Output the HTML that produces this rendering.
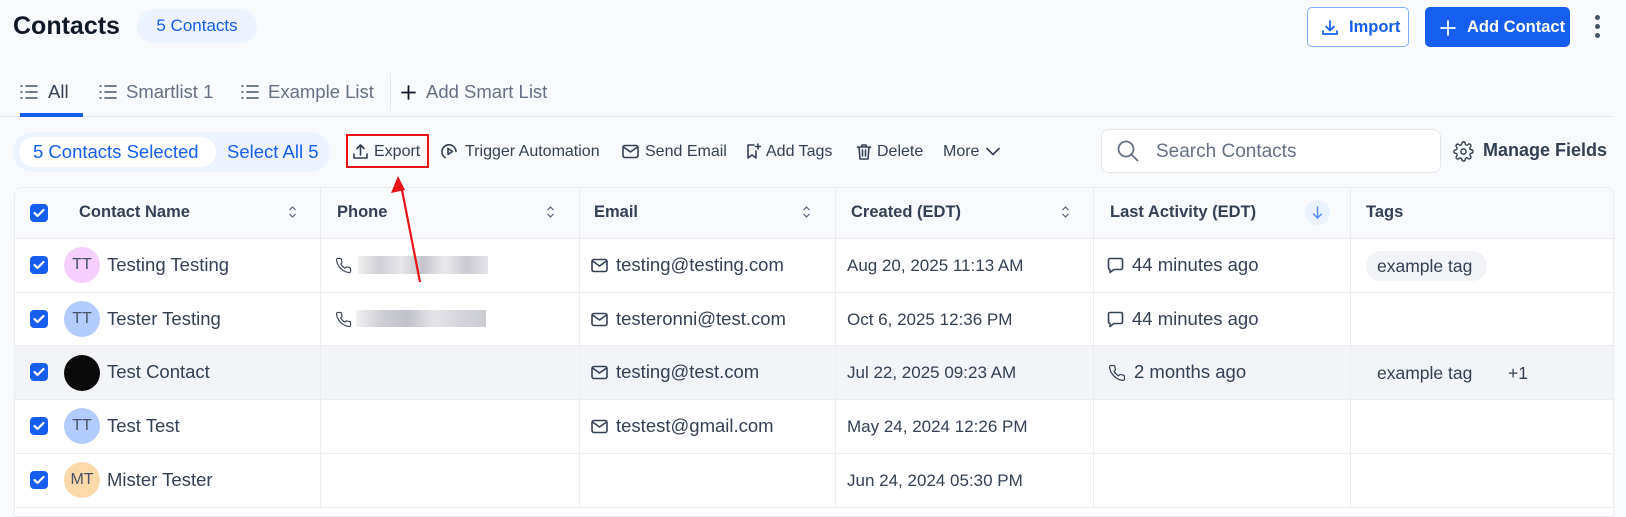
<!DOCTYPE html>
<html><head><meta charset="utf-8"><style>
*{box-sizing:border-box;margin:0;padding:0}
body{width:1626px;height:515px;overflow:hidden;background:#f9fafb;font-family:"Liberation Sans",sans-serif;color:#344054;position:relative}
.a{position:absolute;white-space:nowrap}
svg{display:block}
.ic{stroke:#344054;fill:none;stroke-width:1.6;stroke-linecap:round;stroke-linejoin:round}
.tb{font-size:16px;color:#344054;top:143px}
.hd{font-size:16.5px;font-weight:bold;color:#344054;top:203px}
.cell{font-size:18.5px;color:#344054}
.dt{font-size:17px;color:#344054}
.cb{position:absolute;left:30px;width:18px;height:18px;border-radius:4px;background:#155eef}
.av{position:absolute;left:64px;width:36px;height:36px;border-radius:50%;font-size:16px;color:#475467;text-align:center;line-height:36px}
.vl{position:absolute;top:187px;width:1px;height:320px;background:#eaecf0}
.hl{position:absolute;left:14px;width:1600px;height:1px;background:#eaecf0}
</style></head><body>
<div class="a" style="left:13px;top:12px;font-size:25px;font-weight:bold;color:#101828">Contacts</div>
<div class="a" style="left:137px;top:9px;width:120px;height:34px;border-radius:17px;background:#eef4ff;color:#155eef;font-size:17px;text-align:center;line-height:34px">5 Contacts</div>

<div class="a" style="left:1307px;top:7px;width:102px;height:40px;border:1px solid #84adff;border-radius:5px;background:#fff"></div>
<svg class="a" style="left:1320px;top:18px" width="20" height="20" viewBox="0 0 20 20"><path d="M10 3v9M6 8.5l4 4 4-4M3 13v3h14v-3" stroke="#155eef" fill="none" stroke-width="1.7" stroke-linecap="round" stroke-linejoin="round"/></svg>
<div class="a" style="left:1349px;top:18px;font-size:16.5px;font-weight:bold;color:#155eef">Import</div>
<div class="a" style="left:1425px;top:7px;width:145px;height:40px;border-radius:5px;background:#155eef"></div>
<svg class="a" style="left:1440px;top:20px" width="16" height="16" viewBox="0 0 16 16"><path d="M8 1v14M1 8h14" stroke="#fff" stroke-width="1.8" stroke-linecap="round"/></svg>
<div class="a" style="left:1467px;top:18px;font-size:16.5px;font-weight:bold;color:#fff">Add Contact</div>
<div class="a" style="left:1595px;top:15px;width:5px;height:5px;border-radius:50%;background:#475467"></div>
<div class="a" style="left:1595px;top:24px;width:5px;height:5px;border-radius:50%;background:#475467"></div>
<div class="a" style="left:1595px;top:33px;width:5px;height:5px;border-radius:50%;background:#475467"></div>

<!-- tabs -->
<svg class="a" style="left:20px;top:84px" width="18" height="16" viewBox="0 0 18 16"><g stroke="#475467" stroke-width="1.6" stroke-linecap="round"><path d="M1 2h1M1 8h1M1 14h1M6 2h11M6 8h11M6 14h11"/></g></svg>
<div class="a" style="left:48px;top:81px;font-size:18.5px;color:#344054">All</div>
<svg class="a" style="left:99px;top:84px" width="18" height="16" viewBox="0 0 18 16"><g stroke="#475467" stroke-width="1.6" stroke-linecap="round"><path d="M1 2h1M1 8h1M1 14h1M6 2h11M6 8h11M6 14h11"/></g></svg>
<div class="a" style="left:126px;top:81px;font-size:18.5px;color:#667085">Smartlist 1</div>
<svg class="a" style="left:241px;top:84px" width="18" height="16" viewBox="0 0 18 16"><g stroke="#475467" stroke-width="1.6" stroke-linecap="round"><path d="M1 2h1M1 8h1M1 14h1M6 2h11M6 8h11M6 14h11"/></g></svg>
<div class="a" style="left:268px;top:81px;font-size:18.5px;color:#667085">Example List</div>
<div class="a" style="left:390px;top:73px;width:1px;height:38px;background:#e4e7ec"></div>
<svg class="a" style="left:401px;top:85px" width="15" height="15" viewBox="0 0 15 15"><path d="M7.5 1v13M1 7.5h13" stroke="#101828" stroke-width="1.8" stroke-linecap="round"/></svg>
<div class="a" style="left:426px;top:81px;font-size:18.5px;color:#667085">Add Smart List</div>
<div class="a" style="left:0;top:116px;width:1614px;height:1px;background:#e4e7ec"></div>
<div class="a" style="left:20px;top:113px;width:63px;height:4px;background:#155eef"></div>

<!-- toolbar -->
<div class="a" style="left:13px;top:132px;width:317px;height:40px;border-radius:20px;background:#eef4ff"></div>
<div class="a" style="left:19px;top:137px;width:197px;height:30px;border-radius:15px;background:#fff"></div>
<div class="a" style="left:33px;top:141px;font-size:18.5px;color:#155eef">5 Contacts Selected</div>
<div class="a" style="left:227px;top:141px;font-size:18.5px;color:#155eef">Select All 5</div>
<div class="a" style="left:346px;top:134px;width:83px;height:34px;border:2.5px solid #e8141a"></div>
<svg class="a" style="left:352px;top:143px" width="17" height="17" viewBox="0 0 17 17"><path d="M8.5 12V2M5 5.5l3.5-3.5 3.5 3.5M2 11v4h13v-4" class="ic"/></svg>
<div class="a tb" style="left:374px">Export</div>
<svg class="a" style="left:441px;top:143px" width="17" height="17" viewBox="0 0 17 17"><path d="M4 14.5A7 7 0 1 1 15 8.5" class="ic"/><path d="M7 5.5v6l4.5-3z" class="ic"/></svg>
<div class="a tb" style="left:465px">Trigger Automation</div>
<svg class="a" style="left:622px;top:144px" width="17" height="15" viewBox="0 0 17 15"><rect x="1" y="1.5" width="15" height="12" rx="2" class="ic"/><path d="M1.5 3l7 5 7-5" class="ic"/></svg>
<div class="a tb" style="left:645px">Send Email</div>
<svg class="a" style="left:745px;top:143px" width="16" height="17" viewBox="0 0 16 17"><path d="M9 2H3v13l4-3 4 3V8M13 1v5M10.5 3.5h5" class="ic"/></svg>
<div class="a tb" style="left:766px">Add Tags</div>
<svg class="a" style="left:856px;top:143px" width="16" height="17" viewBox="0 0 16 17"><path d="M1.5 4h13M6 4V2h4v2M3 4l1 12h8l1-12M6.5 7v6M9.5 7v6" class="ic"/></svg>
<div class="a tb" style="left:877px">Delete</div>
<div class="a tb" style="left:943px">More</div>
<svg class="a" style="left:986px;top:147px" width="14" height="9" viewBox="0 0 14 9"><path d="M1 1.5l6 6 6-6" class="ic"/></svg>

<div class="a" style="left:1101px;top:129px;width:340px;height:44px;border:1px solid #e4e7ec;border-radius:8px;background:#fff"></div>
<svg class="a" style="left:1117px;top:140px" width="22" height="22" viewBox="0 0 22 22"><circle cx="9" cy="9" r="7.5" stroke="#667085" stroke-width="1.8" fill="none"/><path d="M14.5 14.5l6 6" stroke="#667085" stroke-width="1.8" stroke-linecap="round"/></svg>
<div class="a" style="left:1156px;top:141px;font-size:19px;color:#667085">Search Contacts</div>
<svg class="a" style="left:1453px;top:141px" width="21" height="21" viewBox="0 0 24 24"><circle cx="12" cy="12" r="3" class="ic" stroke-width="1.8"/><path class="ic" stroke-width="1.8" d="M19.4 15a1.7 1.7 0 0 0 .3 1.8l.1.1a2 2 0 1 1-2.8 2.8l-.1-.1a1.7 1.7 0 0 0-1.8-.3 1.7 1.7 0 0 0-1 1.5V21a2 2 0 1 1-4 0v-.1a1.7 1.7 0 0 0-1.1-1.5 1.7 1.7 0 0 0-1.8.3l-.1.1a2 2 0 1 1-2.8-2.8l.1-.1a1.7 1.7 0 0 0 .3-1.8 1.7 1.7 0 0 0-1.5-1H3a2 2 0 1 1 0-4h.1a1.7 1.7 0 0 0 1.5-1.1 1.7 1.7 0 0 0-.3-1.8l-.1-.1a2 2 0 1 1 2.8-2.8l.1.1a1.7 1.7 0 0 0 1.8.3H9a1.7 1.7 0 0 0 1-1.5V3a2 2 0 1 1 4 0v.1a1.7 1.7 0 0 0 1 1.5 1.7 1.7 0 0 0 1.8-.3l.1-.1a2 2 0 1 1 2.8 2.8l-.1.1a1.7 1.7 0 0 0-.3 1.8V9a1.7 1.7 0 0 0 1.5 1H21a2 2 0 1 1 0 4h-.1a1.7 1.7 0 0 0-1.5 1z"/></svg>
<div class="a" style="left:1483px;top:140px;font-size:18px;font-weight:bold;color:#344054">Manage Fields</div>

<!-- table -->
<div class="a" style="left:14px;top:187px;width:1600px;height:330px;background:#fff;border:1px solid #eaecf0;border-radius:8px 8px 0 0"></div>
<div class="a" style="left:15px;top:188px;width:1598px;height:50px;background:#f9fafb;border-radius:8px 8px 0 0"></div>
<div class="a" style="left:15px;top:345px;width:1598px;height:54px;background:#f2f4f7"></div>
<div class="hl" style="top:238px"></div><div class="hl" style="top:292px"></div><div class="hl" style="top:345px"></div><div class="hl" style="top:399px"></div><div class="hl" style="top:453px"></div><div class="hl" style="top:507px"></div>
<div class="vl" style="left:320px"></div><div class="vl" style="left:579px"></div><div class="vl" style="left:835px"></div><div class="vl" style="left:1093px"></div><div class="vl" style="left:1350px"></div>

<!-- header -->
<div class="cb" style="top:204px"></div>
<div class="a hd" style="left:79px">Contact Name</div>
<div class="a hd" style="left:337px">Phone</div>
<div class="a hd" style="left:594px">Email</div>
<div class="a hd" style="left:851px">Created (EDT)</div>
<div class="a hd" style="left:1110px">Last Activity (EDT)</div>
<div class="a hd" style="left:1366px">Tags</div>
<svg class="a" style="left:288px;top:205px" width="9" height="14" viewBox="0 0 9 14"><path d="M1.5 5l3-3 3 3M1.5 9l3 3 3-3" stroke="#667085" fill="none" stroke-width="1.3"/></svg>
<svg class="a" style="left:546px;top:205px" width="9" height="14" viewBox="0 0 9 14"><path d="M1.5 5l3-3 3 3M1.5 9l3 3 3-3" stroke="#667085" fill="none" stroke-width="1.3"/></svg>
<svg class="a" style="left:802px;top:205px" width="9" height="14" viewBox="0 0 9 14"><path d="M1.5 5l3-3 3 3M1.5 9l3 3 3-3" stroke="#667085" fill="none" stroke-width="1.3"/></svg>
<svg class="a" style="left:1061px;top:205px" width="9" height="14" viewBox="0 0 9 14"><path d="M1.5 5l3-3 3 3M1.5 9l3 3 3-3" stroke="#667085" fill="none" stroke-width="1.3"/></svg>
<div class="a" style="left:1305px;top:200px;width:25px;height:25px;border-radius:50%;background:#eaf2ff"></div>
<svg class="a" style="left:1312px;top:206px" width="11" height="13" viewBox="0 0 11 13"><path d="M5.5 1v11M1.5 8l4 4 4-4" stroke="#528bff" fill="none" stroke-width="1.4" stroke-linecap="round"/></svg>

<!-- rows -->
<div class="cb" style="top:256px"></div><div class="cb" style="top:310px"></div><div class="cb" style="top:363px"></div><div class="cb" style="top:417px"></div><div class="cb" style="top:471px"></div>

<svg style="position:absolute;left:0;top:0" width="60" height="515"><g stroke="#fff" stroke-width="2.2" fill="none" stroke-linecap="round" stroke-linejoin="round"><path d="M34.5 213l3 3 6-6"/><path d="M34.5 265l3 3 6-6"/><path d="M34.5 319l3 3 6-6"/><path d="M34.5 372l3 3 6-6"/><path d="M34.5 426l3 3 6-6"/><path d="M34.5 480l3 3 6-6"/></g></svg>

<div class="av" style="top:247px;background:#f5d0fe">TT</div>
<div class="av" style="top:301px;background:#b2ccff">TT</div>
<div class="av" style="top:355px;background:#0a0a0a"></div>
<div class="av" style="top:408px;background:#b2ccff">TT</div>
<div class="av" style="top:462px;background:#fcd9a8">MT</div>
<div class="a cell" style="left:107px;top:254px">Testing Testing</div>
<div class="a cell" style="left:107px;top:308px">Tester Testing</div>
<div class="a cell" style="left:107px;top:361px">Test Contact</div>
<div class="a cell" style="left:107px;top:415px">Test Test</div>
<div class="a cell" style="left:107px;top:469px">Mister Tester</div>

<svg class="a" style="left:335px;top:257px" width="17" height="17" viewBox="0 0 24 24"><path class="ic" stroke-width="1.8" d="M22 16.9v3a2 2 0 0 1-2.2 2 19.8 19.8 0 0 1-8.6-3.1 19.5 19.5 0 0 1-6-6A19.8 19.8 0 0 1 2.1 4.2 2 2 0 0 1 4.1 2h3a2 2 0 0 1 2 1.7c.1 1 .4 1.9.7 2.8a2 2 0 0 1-.5 2.1L8 9.8a16 16 0 0 0 6 6l1.3-1.3a2 2 0 0 1 2.1-.4c.9.3 1.8.6 2.8.7a2 2 0 0 1 1.7 2z"/></svg>
<div class="a" style="left:358px;top:256px;width:130px;height:18px;background:linear-gradient(90deg,#eee,#c9c9d0,#e4e4ea,#bdbdc6,#e8e8ec,#c4c4cc,#e0e0e6);opacity:.9"></div>
<svg class="a" style="left:335px;top:311px" width="17" height="17" viewBox="0 0 24 24"><path class="ic" stroke-width="1.8" d="M22 16.9v3a2 2 0 0 1-2.2 2 19.8 19.8 0 0 1-8.6-3.1 19.5 19.5 0 0 1-6-6A19.8 19.8 0 0 1 2.1 4.2 2 2 0 0 1 4.1 2h3a2 2 0 0 1 2 1.7c.1 1 .4 1.9.7 2.8a2 2 0 0 1-.5 2.1L8 9.8a16 16 0 0 0 6 6l1.3-1.3a2 2 0 0 1 2.1-.4c.9.3 1.8.6 2.8.7a2 2 0 0 1 1.7 2z"/></svg>
<div class="a" style="left:356px;top:310px;width:130px;height:17px;background:linear-gradient(90deg,#f0f0f2,#c8c8d0,#bbbbc4,#e2e2e8,#d0d0d8,#c6c6ce);opacity:.9"></div>

<svg class="a" style="left:591px;top:258px" width="17" height="15" viewBox="0 0 17 15"><rect x="1" y="1.5" width="15" height="12" rx="2" class="ic"/><path d="M1.5 3l7 5 7-5" class="ic"/></svg>
<div class="a cell" style="left:616px;top:254px">testing@testing.com</div>
<svg class="a" style="left:591px;top:312px" width="17" height="15" viewBox="0 0 17 15"><rect x="1" y="1.5" width="15" height="12" rx="2" class="ic"/><path d="M1.5 3l7 5 7-5" class="ic"/></svg>
<div class="a cell" style="left:616px;top:308px">testeronni@test.com</div>
<svg class="a" style="left:591px;top:365px" width="17" height="15" viewBox="0 0 17 15"><rect x="1" y="1.5" width="15" height="12" rx="2" class="ic"/><path d="M1.5 3l7 5 7-5" class="ic"/></svg>
<div class="a cell" style="left:616px;top:361px">testing@test.com</div>
<svg class="a" style="left:591px;top:419px" width="17" height="15" viewBox="0 0 17 15"><rect x="1" y="1.5" width="15" height="12" rx="2" class="ic"/><path d="M1.5 3l7 5 7-5" class="ic"/></svg>
<div class="a cell" style="left:616px;top:415px">testest@gmail.com</div>

<div class="a dt" style="left:847px;top:256px">Aug 20, 2025 11:13 AM</div>
<div class="a dt" style="left:847px;top:310px">Oct 6, 2025 12:36 PM</div>
<div class="a dt" style="left:847px;top:363px">Jul 22, 2025 09:23 AM</div>
<div class="a dt" style="left:847px;top:417px">May 24, 2024 12:26 PM</div>
<div class="a dt" style="left:847px;top:471px">Jun 24, 2024 05:30 PM</div>

<svg class="a" style="left:1107px;top:257px" width="17" height="17" viewBox="0 0 17 17"><path d="M3 1.5h11a1.5 1.5 0 0 1 1.5 1.5v8a1.5 1.5 0 0 1-1.5 1.5H7l-4 3v-3a1.5 1.5 0 0 1-1.5-1.5V3A1.5 1.5 0 0 1 3 1.5z" class="ic"/></svg>
<div class="a cell" style="left:1132px;top:254px">44 minutes ago</div>
<svg class="a" style="left:1107px;top:311px" width="17" height="17" viewBox="0 0 17 17"><path d="M3 1.5h11a1.5 1.5 0 0 1 1.5 1.5v8a1.5 1.5 0 0 1-1.5 1.5H7l-4 3v-3a1.5 1.5 0 0 1-1.5-1.5V3A1.5 1.5 0 0 1 3 1.5z" class="ic"/></svg>
<div class="a cell" style="left:1132px;top:308px">44 minutes ago</div>
<svg class="a" style="left:1108px;top:364px" width="18" height="18" viewBox="0 0 24 24"><path class="ic" stroke-width="1.8" d="M22 16.9v3a2 2 0 0 1-2.2 2 19.8 19.8 0 0 1-8.6-3.1 19.5 19.5 0 0 1-6-6A19.8 19.8 0 0 1 2.1 4.2 2 2 0 0 1 4.1 2h3a2 2 0 0 1 2 1.7c.1 1 .4 1.9.7 2.8a2 2 0 0 1-.5 2.1L8 9.8a16 16 0 0 0 6 6l1.3-1.3a2 2 0 0 1 2.1-.4c.9.3 1.8.6 2.8.7a2 2 0 0 1 1.7 2z"/></svg>
<div class="a cell" style="left:1134px;top:361px">2 months ago</div>

<div class="a" style="left:1366px;top:251px;width:121px;height:30px;border-radius:15px;background:#f2f4f7"></div>
<div class="a dt" style="left:1377px;top:256px;font-size:17.5px">example tag</div>
<div class="a dt" style="left:1377px;top:363px;font-size:17.5px">example tag</div>
<div class="a dt" style="left:1508px;top:363px;font-size:17.5px">+1</div>

<svg class="a" style="left:0;top:0" width="600" height="300"><path d="M420 282L402 190" stroke="#e8141a" stroke-width="2.2"/><path d="M398 176l-7 17 14-3z" fill="#e8141a"/></svg>
</body></html>
